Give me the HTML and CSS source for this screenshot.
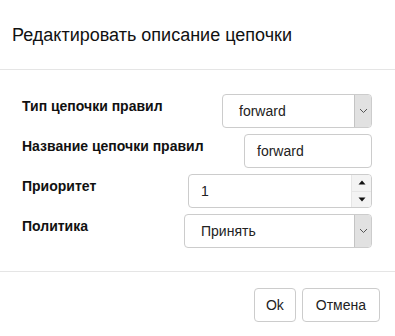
FILE: index.html
```html
<!DOCTYPE html>
<html lang="ru">
<head>
<meta charset="utf-8">
<title>Редактировать описание цепочки</title>
<link rel="stylesheet" href="styles.css">
</head>
<body>
<div class="modal">
  <div class="modal-header">
    <h4 class="modal-title">Редактировать описание цепочки</h4>
  </div>
  <div class="modal-body">
    <div class="row">
      <label class="label">Тип цепочки правил</label>
      <div class="control select w150">
        <span class="value">forward</span>
        <span class="arrow"><svg width="9" height="6" viewBox="0 0 9 6"><path d="M1 1 L4.5 4.5 L8 1" fill="none" stroke="#555" stroke-width="1"/></svg></span>
      </div>
    </div>
    <div class="row">
      <label class="label">Название цепочки правил</label>
      <div class="control input w128"><span class="value">forward</span></div>
    </div>
    <div class="row">
      <label class="label">Приоритет</label>
      <div class="control number w184">
        <span class="value">1</span>
        <span class="spin">
          <span class="spin-btn"><svg width="8" height="5" viewBox="0 0 8 5"><path d="M0.5 4.5 L4 0.5 L7.5 4.5 Z" fill="#111"/></svg></span>
          <span class="spin-btn"><svg width="8" height="5" viewBox="0 0 8 5"><path d="M0.5 0.5 L4 4.5 L7.5 0.5 Z" fill="#111"/></svg></span>
        </span>
      </div>
    </div>
    <div class="row">
      <label class="label">Политика</label>
      <div class="control select w188">
        <span class="value">Принять</span>
        <span class="arrow"><svg width="9" height="6" viewBox="0 0 9 6"><path d="M1 1 L4.5 4.5 L8 1" fill="none" stroke="#555" stroke-width="1"/></svg></span>
      </div>
    </div>
  </div>
  <div class="modal-footer">
    <button class="btn btn-ok">Ok</button>
    <button class="btn">Отмена</button>
  </div>
</div>
</body>
</html>
```

FILE: styles.css
```css
html, body {
  margin: 0;
  padding: 0;
  background: #fff;
}

.modal {
  width: 395px;
  height: 336px;
  font-family: "Liberation Sans", Arial, sans-serif;
  color: #222;
  background: #fff;
  box-sizing: border-box;
}

.modal-header {
  padding: 22px 12px 21px;
  border-bottom: 1px solid #e5e5e5;
}

.modal-title {
  margin: 0;
  font-size: 18px;
  line-height: 26px;
  font-weight: normal;
  color: #111;
}

.modal-body {
  padding: 24px 23px 23px 22px;
  display: flex;
  flex-direction: column;
  gap: 6px;
}

.row {
  display: flex;
  align-items: flex-start;
  height: 34px;
}

.label {
  font-size: 14px;
  font-weight: bold;
  line-height: 20px;
  margin-top: 2px;
  color: #111;
}

.control {
  margin-left: auto;
  height: 34px;
  box-sizing: border-box;
  border: 1px solid #ccc;
  border-radius: 4px;
  display: flex;
  align-items: center;
  font-size: 14px;
  color: #222;
  background: #fff;
  overflow: hidden;
}

.w150 { width: 150px; }
.w128 { width: 128px; }
.w184 { width: 184px; }
.w188 { width: 188px; }

.select .value {
  padding-left: 16px;
  flex: 1;
}

.input .value,
.number .value {
  padding-left: 12px;
  flex: 1;
}

.arrow {
  align-self: stretch;
  width: 16px;
  background: #e1e1e1;
  border-left: 1px solid #c4c4c4;
  display: flex;
  align-items: center;
  justify-content: center;
}

.spin {
  align-self: stretch;
  width: 19px;
  display: flex;
  flex-direction: column;
  background: #f3f3f3;
  border-left: 1px solid #e6e6e6;
}

.spin-btn {
  flex: 1;
  display: flex;
  align-items: center;
  justify-content: center;
}

.spin-btn + .spin-btn {
  border-top: 1px solid #e6e6e6;
}

.modal-footer {
  border-top: 1px solid #e5e5e5;
  padding: 16px 15px 14px;
  display: flex;
  justify-content: flex-end;
  gap: 6px;
}

.btn {
  height: 34px;
  box-sizing: border-box;
  border: 1px solid #ccc;
  border-radius: 4px;
  background: #fff;
  font-family: "Liberation Sans", Arial, sans-serif;
  font-size: 14px;
  color: #222;
  padding: 0 13px;
  margin: 0;
}

.btn-ok {
  padding: 0 11px;
}
```
